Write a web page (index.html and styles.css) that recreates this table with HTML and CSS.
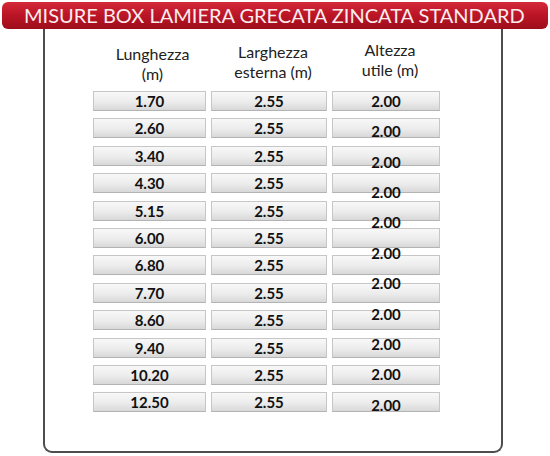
FILE: index.html
```html
<!DOCTYPE html>
<html lang="it">
<head>
<meta charset="utf-8">
<title>Misure box lamiera grecata zincata standard</title>
<link rel="stylesheet" href="styles.css">
</head>
<body>
<div class="page">
  <div class="banner">MISURE BOX LAMIERA GRECATA ZINCATA STANDARD</div>
  <div class="box">
    <div class="heads">
      <div class="head head-len">Lunghezza<br>(m)</div>
      <div class="head head-wid">Larghezza<br>esterna (m)</div>
      <div class="head head-hei">Altezza<br>utile (m)</div>
    </div>
    <div class="cols">
      <div class="col">
        <div class="cell">1.70</div>
        <div class="cell">2.60</div>
        <div class="cell">3.40</div>
        <div class="cell">4.30</div>
        <div class="cell">5.15</div>
        <div class="cell">6.00</div>
        <div class="cell">6.80</div>
        <div class="cell">7.70</div>
        <div class="cell">8.60</div>
        <div class="cell">9.40</div>
        <div class="cell">10.20</div>
        <div class="cell">12.50</div>
      </div>
      <div class="col">
        <div class="cell">2.55</div>
        <div class="cell">2.55</div>
        <div class="cell">2.55</div>
        <div class="cell">2.55</div>
        <div class="cell">2.55</div>
        <div class="cell">2.55</div>
        <div class="cell">2.55</div>
        <div class="cell">2.55</div>
        <div class="cell">2.55</div>
        <div class="cell">2.55</div>
        <div class="cell">2.55</div>
        <div class="cell">2.55</div>
      </div>
      <div class="col col-stack">
        <div class="layer">
          <div class="cell"></div>
          <div class="cell"></div>
          <div class="cell"></div>
          <div class="cell"></div>
          <div class="cell"></div>
          <div class="cell"></div>
          <div class="cell"></div>
          <div class="cell"></div>
          <div class="cell"></div>
          <div class="cell"></div>
          <div class="cell"></div>
          <div class="cell"></div>
        </div>
        <div class="labels">
          <div class="label">2.00</div>
          <div class="label">2.00</div>
          <div class="label">2.00</div>
          <div class="label">2.00</div>
          <div class="label">2.00</div>
          <div class="label">2.00</div>
          <div class="label">2.00</div>
          <div class="label">2.00</div>
          <div class="label">2.00</div>
          <div class="label">2.00</div>
          <div class="label">2.00</div>
        </div>
      </div>
    </div>
  </div>
</div>
</body>
</html>
```
FILE: styles.css
```css
html, body {
  margin: 0;
  padding: 0;
  background: #ffffff;
}
body {
  font-family: Lato, "Open Sans", "Liberation Sans", sans-serif;
  color: #1a1a1a;
}
.page {
  width: 550px;
  height: 456px;
  padding: 2px 0 0 2px;
  box-sizing: border-box;
  overflow: hidden;
}
.banner {
  width: 546px;
  height: 27px;
  box-sizing: border-box;
  border-radius: 6px;
  background: linear-gradient(#d42a3a 0%, #bd1627 45%, #9e0d1b 100%);
  color: #fbecee;
  font-size: 20px;
  line-height: 27px;
  padding-left: 22px;
  letter-spacing: 0;
  white-space: nowrap;
}
.box {
  margin-left: 41px;
  width: 460px;
  height: 424px;
  box-sizing: border-box;
  border: 2px solid #4d4d4d;
  border-top: 0;
  border-radius: 0 0 9px 9px;
  padding-left: 48px;
}
.heads {
  display: grid;
  grid-template-columns: 113px 116px 108px;
  column-gap: 5px;
  height: 62px;
  align-items: start;
}
.head {
  font-size: 16px;
  line-height: 20px;
  text-align: center;
  color: #222;
  padding-left: 6px;
}
.head-len { margin-top: 15px; }
.head-wid { margin-top: 13px; padding-left: 8px; }
.head-hei { margin-top: 11px; padding-left: 8px; }
.cols {
  display: grid;
  grid-template-columns: 113px 116px 108px;
  column-gap: 5px;
}
.col, .layer {
  display: flex;
  flex-direction: column;
  gap: 7.4px;
}
.cell {
  height: 20px;
  box-sizing: border-box;
  border: 1px solid #c6c6c6;
  border-bottom-color: #b3b3b3;
  background: linear-gradient(#f8f8f8 0%, #ececec 55%, #d8d8d8 100%);
  font-size: 15px;
  font-weight: 700;
  line-height: 18px;
  text-align: center;
  color: #111;
}
.col-stack {
  display: grid;
}
.layer, .labels {
  grid-area: 1 / 1;
}
.labels {
  margin-top: -5.2px;
}
.label {
  height: 30.4px;
  line-height: 30.4px;
  font-size: 15px;
  font-weight: 700;
  text-align: center;
  color: #111;
}
```
